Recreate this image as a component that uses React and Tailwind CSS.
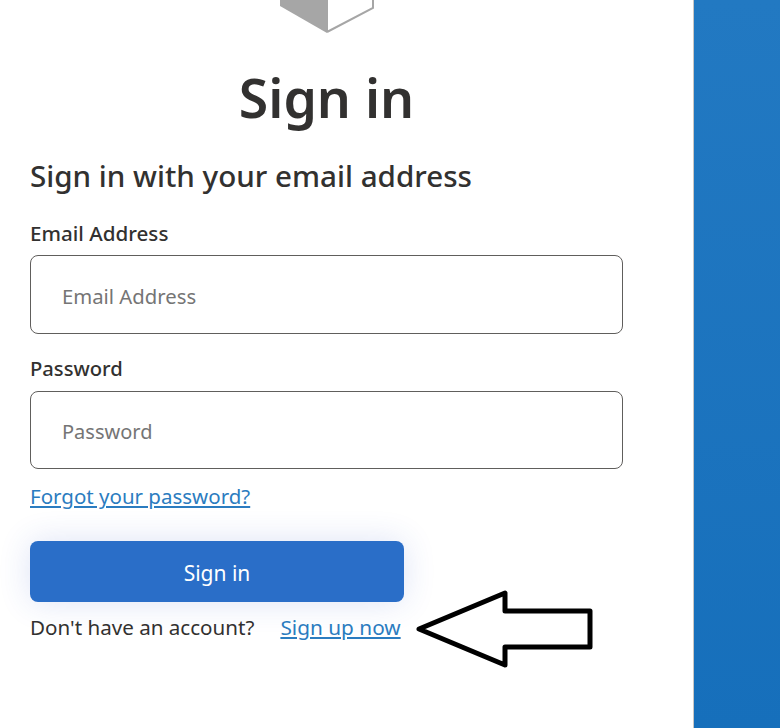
import React from 'react';

export default function App() {
  return (
    <div className="relative flex h-[728px] w-[780px] overflow-hidden bg-white font-['Noto_Sans',sans-serif] text-[#323130]">
      {/* Form column */}
      <div className="w-[693px] shrink-0">
        <div className="w-[653px]">
          <div className="flex justify-center">
            <svg width="96" height="34" viewBox="0 0 96 34" className="ml-[2px] block">
              <path d="M0 0 L47 0 L47 33 L0 6 Z" fill="#a6a6a6" />
              <path d="M47 32 L47 0 M47 32 L93 8 L93 0" fill="none" stroke="#a6a6a6" strokeWidth="2" />
            </svg>
          </div>
          <h1 className="mt-[27px] text-center text-[53.5px] leading-[74px] font-semibold">Sign in</h1>
        </div>

        <form className="ml-[30px] w-[593px]">
          <h2 className="mt-[21px] text-[29.6px] leading-[40px] font-medium">Sign in with your email address</h2>

          <label className="mt-[23px] block text-[20.6px] leading-[28px] font-medium">Email Address</label>
          <input
            placeholder="Email Address"
            className="mt-[8px] block h-[79px] w-full rounded-lg border border-[#605e5c] px-[31px] pt-[3px] text-[20.3px] outline-none placeholder:text-[#757575]"
          />

          <label className="mt-[20px] mb-[9px] block text-[20.2px] leading-[28px] font-medium">Password</label>
          <input
            placeholder="Password"
            className="block h-[78px] w-full rounded-lg border border-[#605e5c] px-[31px] pt-[3px] text-[20px] outline-none placeholder:text-[#757575]"
          />

          <a href="#" className="mt-[13px] block text-[20.5px] leading-[28px] text-[#2b7cc0] underline">Forgot your password?</a>

          <button
            type="button"
            className="mt-[31px] block h-[61px] w-[374px] rounded-lg bg-[#2a6ec8] pt-[4px] text-[21px] text-white shadow-[0_0_32px_rgba(42,80,200,0.16)]"
          >
            Sign in
          </button>

          <div className="mt-[11px] flex w-[374px] items-center text-[20.6px] leading-[28px]">
            <span>Don't have an account?</span>
            <a href="#" className="ml-[26px] text-[20.8px] text-[#2b7cc0] underline">Sign up now</a>
          </div>
        </form>
      </div>

      {/* Blue side panel */}
      <div className="flex-1 border-l border-[#c8c6c4] bg-gradient-to-b from-[#2279c2] to-[#166fbb]" />

      {/* Annotation arrow */}
      <svg width="190" height="84" viewBox="0 0 190 84" className="absolute top-[587px] left-[410px]">
        <path d="M9 42 L95 6 L95 24 L180 24 L180 60 L95 60 L95 78 Z" fill="white" stroke="black" strokeWidth="5" strokeLinejoin="round" />
      </svg>
    </div>
  );
}
